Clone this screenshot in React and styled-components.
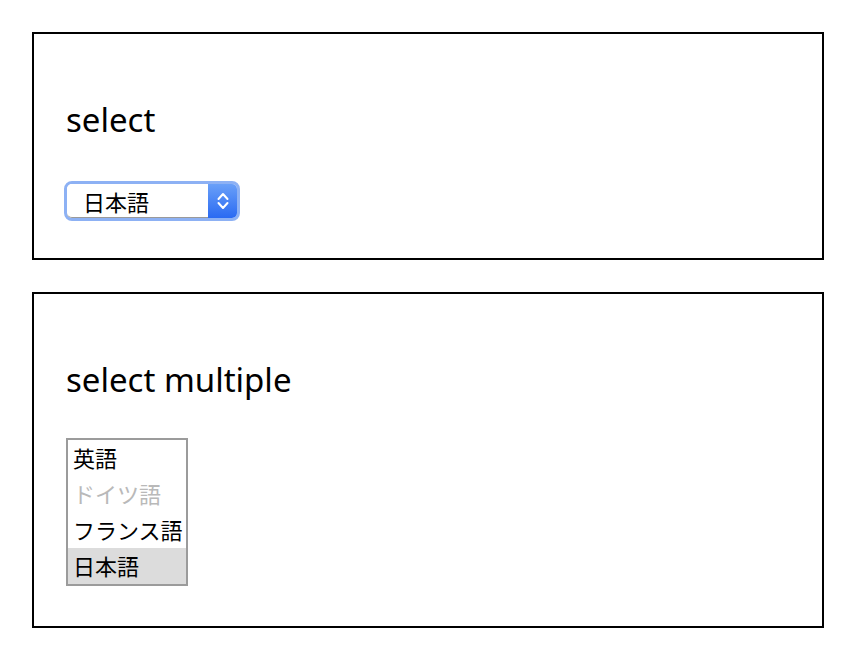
import React from "react";
import styled, { createGlobalStyle } from "styled-components";

const Global = createGlobalStyle`
  body {
    margin: 0;
    padding: 32px 38px 32px 32px;
    background: #fff;
    font-family: "Noto Sans CJK JP", "Noto Sans", sans-serif;
    color: #000;
  }
`;

const Page = styled.main`
  display: flex;
  flex-direction: column;
  gap: 32px;
`;

const Panel = styled.section`
  border: 2px solid #000;
  padding: 66px 32px ${(p) => p.$bottom}px;
`;

const Heading = styled.h2`
  margin: 0 0 ${(p) => p.$gap}px;
  font-family: "Noto Sans", "Noto Sans CJK JP", sans-serif;
  font-size: 33px;
  font-weight: 400;
  line-height: 40px;
`;

const Ring = styled.div`
  display: inline-flex;
  width: 170px;
  height: 34px;
  border: 3px solid #8db1f4;
  border-radius: 8px;
  margin-left: -2px;
`;

const Field = styled.div`
  flex: 1;
  display: flex;
  align-items: center;
  padding-left: 16px;
  background: #fff;
  border-radius: 5px 0 0 5px;
  border-bottom: 1px solid #9a9a9a;
  font-size: 22px;
`;

const Arrow = styled.div`
  width: 29px;
  display: flex;
  align-items: center;
  justify-content: center;
  background: linear-gradient(#6aa0f8, #2a6af2);
  border-radius: 0 5px 5px 0;
`;

const List = styled.div`
  width: 118px;
  border: 2px solid #9b9b9b;
  display: flex;
  flex-direction: column;
`;

const Option = styled.div`
  height: 36px;
  line-height: 34px;
  padding-left: 5px;
  font-size: 22px;
  white-space: nowrap;
  color: ${(p) => (p.$disabled ? "#b9b9b9" : "#000")};
  background: ${(p) => (p.$selected ? "#dcdcdc" : "#fff")};
`;

const options = [
  { label: "英語" },
  { label: "ドイツ語", disabled: true },
  { label: "フランス語" },
  { label: "日本語", selected: true },
];

export default function App() {
  return (
    <Page>
      <Global />
      <Panel $bottom={37}>
        <Heading $gap={41}>select</Heading>
        <Ring>
          <Field>日本語</Field>
          <Arrow>
            <svg width="12" height="20" viewBox="0 0 12 20" fill="none" stroke="#fff" strokeWidth="2" strokeLinecap="round" strokeLinejoin="round">
              <path d="M1.5 8 L6 3 L10.5 8" />
              <path d="M1.5 12 L6 17 L10.5 12" />
            </svg>
          </Arrow>
        </Ring>
      </Panel>
      <Panel $bottom={40}>
        <Heading $gap={38}>select multiple</Heading>
        <List role="listbox" aria-multiselectable="true">
          {options.map((o) => (
            <Option key={o.label} $disabled={o.disabled} $selected={o.selected}>
              {o.label}
            </Option>
          ))}
        </List>
      </Panel>
    </Page>
  );
}
